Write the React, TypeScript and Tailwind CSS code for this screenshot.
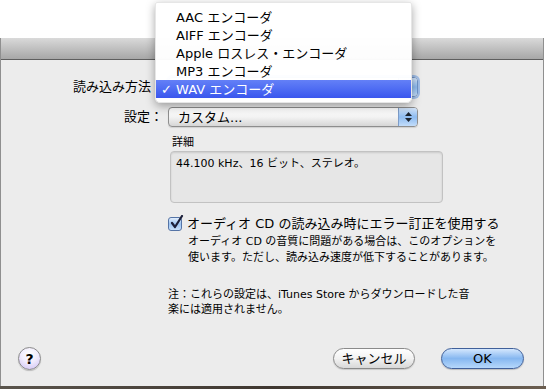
const FONT = { fontFamily: '"DejaVu Sans", "Noto Sans CJK JP", sans-serif' };

const MENU_ITEMS = [
  "AAC エンコーダ",
  "AIFF エンコーダ",
  "Apple ロスレス・エンコーダ",
  "MP3 エンコーダ",
  "WAV エンコーダ",
];

function Stepper() {
  return (
    <div className="w-[19px] h-full rounded-r-[3px] border-l border-[#7d9cc8] bg-gradient-to-b from-[#d5e6fa] via-[#8dbbf0] to-[#c3ddfa] flex flex-col items-center justify-center gap-[2px]">
      <svg width="7" height="4" viewBox="0 0 7 4">
        <polygon points="3.5,0 7,4 0,4" fill="#1c2430" />
      </svg>
      <svg width="7" height="4" viewBox="0 0 7 4">
        <polygon points="0,0 7,0 3.5,4" fill="#1c2430" />
      </svg>
    </div>
  );
}

function PopupButton({ label, focused = false }: { label: string; focused?: boolean }) {
  return (
    <div
      className={
        "h-[20px] w-[250px] rounded-[4px] border flex items-center bg-gradient-to-b from-white via-[#f3f3f3] to-[#d6d6d6] " +
        (focused
          ? "border-[#6f94c8] shadow-[0_0_0_2px_rgba(110,160,230,0.6)]"
          : "border-[#8e8e8e] shadow-[0_1px_1px_rgba(0,0,0,0.12)]")
      }
    >
      <span className="flex-1 pl-[9px] text-[13px] text-black leading-none">{label}</span>
      <Stepper />
    </div>
  );
}

export default function App() {
  return (
    <div className="relative w-[546px] h-[389px] overflow-hidden bg-white text-black" style={FONT}>
      {/* white strip above the sheet */}
      <div className="h-[38px]" />

      {/* dialog */}
      <div className="w-[544px] h-[348px] flex flex-col border-l border-r border-[#8f8f8f]">
        <div className="h-[22px] bg-gradient-to-b from-[#dadada] to-[#a7a7a7] border-b border-[#5e5e5e]" />

        <div className="flex-1 bg-[#ececec] flex flex-col">
          {/* encoder + settings */}
          <div className="mt-[17px] grid grid-cols-[162px_250px] gap-x-[5px] gap-y-[10px] items-center">
            {/* colon and popup label sit under the open menu */}
            <div className="text-right text-[13px] pr-[12px]">読み込み方法</div>
            <PopupButton label="" focused />
            <div className="text-right text-[13px]">設定：</div>
            <PopupButton label="カスタム..." />
          </div>

          <div className="pl-[167px] flex flex-col">
            {/* details */}
            <div className="mt-[9px] ml-[4px] text-[11px] leading-[14px]">詳細</div>
            <div className="mt-[1px] ml-[2px] w-[273px] h-[52px] rounded-[4px] border border-[#c2c2c2] bg-[#e6e6e6] shadow-[inset_0_1px_2px_rgba(0,0,0,0.12)] px-[5px] pt-[5px] text-[11px] leading-[14px]">
              44.100 kHz、16 ビット、ステレオ。
            </div>

            {/* error correction */}
            <div className="mt-[13px] flex items-center gap-[5px]">
              <div className="w-[14px] h-[14px] rounded-[3px] border border-[#5574a6] bg-gradient-to-b from-[#e2eefc] via-[#9cc4f2] to-[#c9e0fa] relative">
                <svg className="absolute -top-[3px] left-[1px]" width="14" height="15" viewBox="0 0 14 15">
                  <path d="M2 8 L5 12 L12 1" fill="none" stroke="#1b1f3a" strokeWidth="2.2" strokeLinecap="round" strokeLinejoin="round" />
                </svg>
              </div>
              <span className="text-[13px] leading-[16px]">オーディオ CD の読み込み時にエラー訂正を使用する</span>
            </div>
            <div className="mt-[2px] ml-[20px] text-[11px] leading-[16px]">
              <div>オーディオ CD の音質に問題がある場合は、このオプションを</div>
              <div>使います。ただし、読み込み速度が低下することがあります。</div>
            </div>

            {/* note */}
            <div className="mt-[21px] text-[11px] leading-[15px]">
              <div>注：これらの設定は、iTunes Store からダウンロードした音</div>
              <div>楽には適用されません。</div>
            </div>
          </div>

          {/* bottom buttons */}
          <div className="mt-auto mb-[16px] flex items-center pl-[17px] pr-[19px]">
            <div className="w-[23px] h-[23px] rounded-full border border-[#8a8a8a] bg-[radial-gradient(circle_at_50%_30%,#ffffff_0%,#f1ecfd_45%,#cdbdf3_100%)] shadow-[0_1px_1px_rgba(0,0,0,0.2)] flex items-center justify-center text-[14px] font-bold leading-none">
              ?
            </div>
            <div className="flex-1" />
            <div className="w-[82px] h-[21px] rounded-full border border-[#8a8a8a] bg-gradient-to-b from-white via-[#f2f2f2] to-[#d8d8d8] shadow-[0_1px_1px_rgba(0,0,0,0.15)] flex items-center justify-center text-[13px] leading-none">
              キャンセル
            </div>
            <div className="w-[83px] h-[21px] ml-[26px] rounded-full border border-[#40609a] bg-gradient-to-b from-[#d4e7fd] via-[#86b7f0] to-[#b6d8fb] shadow-[0_1px_1px_rgba(0,0,0,0.2)] flex items-center justify-center text-[13px] leading-none">
              OK
            </div>
          </div>
        </div>
      </div>

      {/* desktop strip below the sheet */}
      <div className="h-[3px] bg-gradient-to-r from-[#5a544c] via-[#3f3730] to-[#6b5e50]" />

      {/* open encoder menu */}
      <div className="absolute left-[155px] top-[2px] w-[257px] pt-[5px] pb-[4px] rounded-b-[5px] rounded-t-[2px] bg-white/[0.97] shadow-[0_3px_10px_rgba(0,0,0,0.35)] border border-[#e6e6e6]">
        {MENU_ITEMS.map((item, i) => {
          const selected = i === MENU_ITEMS.length - 1;
          return (
            <div
              key={item}
              className={
                "relative h-[18px] flex items-center pl-[20px] text-[13px] leading-none " +
                (selected ? "bg-gradient-to-b from-[#6480f7] to-[#3a56ee] text-white" : "text-black")
              }
            >
              {selected && <span className="absolute left-[5px] text-[13px] font-bold">✓</span>}
              {item}
            </div>
          );
        })}
      </div>
    </div>
  );
}
